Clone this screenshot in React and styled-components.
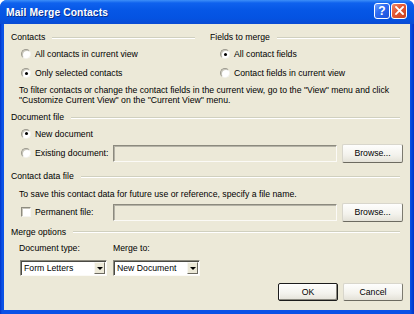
import React from "react";
import styled, { createGlobalStyle } from "styled-components";

const GlobalStyle = createGlobalStyle`
  html, body {
    margin: 0;
    padding: 0;
    background: #ffffff;
  }
  body {
    font-family: "Liberation Sans", Arial, sans-serif;
    font-size: 8.7px;
    color: #000;
  }
`;

const Window = styled.div`
  width: 414px;
  height: 314px;
  box-sizing: border-box;
  display: flex;
  flex-direction: column;
  background: linear-gradient(to right, #0033c8 0px, #0a52e6 2px, #0a52e6 410px, #0033c8 414px);
  padding: 0 4px 4px 4px;
  border-radius: 7px 7px 0 0;
  overflow: hidden;
`;

const TitleBar = styled.div`
  height: 24px;
  margin: 0 -4px;
  padding: 0 7px 0 6px;
  display: flex;
  align-items: center;
  justify-content: space-between;
  background: linear-gradient(
    to bottom,
    #3d8ff8 0px,
    #0f62ee 3px,
    #0657e6 10px,
    #0453e2 18px,
    #0a4bd4 24px
  );
`;

const Title = styled.span`
  color: #fff;
  font-weight: bold;
  font-size: 10.3px;
  letter-spacing: 0.1px;
  text-shadow: 1px 1px 0 #0a2f8c;
  margin-top: 1px;
`;

const Caption = styled.div`
  display: flex;
  gap: 1px;
  margin-top: -3px;
`;

const CapButton = styled.div`
  width: 14px;
  height: 14px;
  border: 1px solid #fff;
  border-radius: 3px;
  display: flex;
  align-items: center;
  justify-content: center;
  color: #fff;
  font-weight: bold;
  font-size: 12px;
  background: ${(p) =>
    p.$close
      ? "linear-gradient(135deg, #f08a6a 0%, #e35a36 40%, #c8401e 100%)"
      : "linear-gradient(135deg, #6fa0ff 0%, #2e6cf2 40%, #1c50d8 100%)"};
`;

const Body = styled.div`
  flex: 1;
  background: #ece9d8;
  padding: 8px 7px 0 7px;
  display: flex;
  flex-direction: column;
`;

const Columns = styled.div`
  display: grid;
  grid-template-columns: 199px 1fr;
`;

const Column = styled.div`
  display: flex;
  flex-direction: column;
`;

const GroupHeader = styled.div`
  display: flex;
  align-items: center;
  gap: 7px;
  height: 11px;
  line-height: 11px;
  margin-top: ${(p) => p.$top || 0}px;
  padding-right: ${(p) => p.$right || 3}px;
  white-space: nowrap;
  &::after {
    content: "";
    flex: 1;
    height: 0;
    border-top: 1px solid #d0d0bf;
    border-bottom: 1px solid #ffffff;
  }
`;

const Spacer = styled.div`
  height: ${(p) => p.$h}px;
`;

const OptionRow = styled.label`
  display: flex;
  align-items: center;
  gap: 4px;
  height: ${(p) => p.$h || 19}px;
  padding-left: 10px;
  white-space: nowrap;
`;

const Radio = styled.span`
  width: 8px;
  height: 8px;
  border-radius: 50%;
  border: 1px solid;
  border-color: #9c9a8e #f4f3ee #f4f3ee #9c9a8e;
  background: radial-gradient(circle at 60% 60%, #ffffff 0%, #ffffff 55%, #e6e4da 100%);
  box-shadow: inset 1px 1px 0 #c8c6ba;
  display: flex;
  align-items: center;
  justify-content: center;
  flex: none;
  &::after {
    content: "";
    width: 3px;
    height: 3px;
    border-radius: 50%;
    background: ${(p) => (p.$on ? "#000" : "transparent")};
  }
`;

const Check = styled.span`
  width: 8px;
  height: 8px;
  border: 1px solid;
  border-color: #8e8c80 #f6f5f0 #f6f5f0 #8e8c80;
  box-shadow: inset 1px 1px 0 #c9c7bb;
  background: #fff;
  flex: none;
`;

const Note = styled.p`
  margin: ${(p) => p.$top || 0}px 0 0 0;
  padding-left: 8px;
  line-height: 10.5px;
`;

const FileRow = styled.div`
  display: grid;
  grid-template-columns: 97px 1fr 61px;
  column-gap: 5px;
  align-items: center;
  height: 20px;
  margin-top: ${(p) => p.$top || 0}px;
`;

const Field = styled.div`
  height: 15px;
  border: 1px solid;
  border-color: #8c8a7e #fbfaf6 #fbfaf6 #8c8a7e;
  box-shadow: inset 1px 1px 0 #b4b2a6;
  background: #ece9d8;
`;

const Button = styled.div`
  height: ${(p) => p.$h || 18}px;
  box-sizing: border-box;
  display: flex;
  align-items: center;
  justify-content: center;
  border: 1px solid;
  border-color: ${(p) => (p.$default ? "#1c1c1c" : "#d8d6cc #7c7a70 #6c6a60 #d8d6cc")};
  border-radius: 2px;
  background: linear-gradient(to bottom, #fefefd 0%, #f3f2ec 60%, #e4e2d8 100%);
  box-shadow: ${(p) => (p.$default ? "inset -1px -1px 0 #8a887e, inset 1px 1px 0 #fff" : "none")};
  width: ${(p) => (p.$w ? `${p.$w}px` : "auto")};
`;

const MergeGrid = styled.div`
  display: grid;
  grid-template-columns: 94px 1fr;
  padding-left: 8px;
  margin-top: 5px;
  row-gap: 6.5px;
`;

const Label = styled.div`
  line-height: 11px;
  height: 11px;
`;

const Select = styled.div`
  width: ${(p) => p.$w}px;
  height: 16px;
  box-sizing: border-box;
  display: flex;
  align-items: center;
  border: 1px solid;
  border-color: #8c8a7e #fbfaf6 #fbfaf6 #8c8a7e;
  box-shadow: inset 1px 1px 0 #4a4a44;
  background: #fff;
  padding: 1px 1px 1px 3px;
  margin-left: ${(p) => p.$ml || 0}px;
`;

const SelectText = styled.span`
  flex: 1;
  white-space: nowrap;
`;

const Arrow = styled.span`
  width: 11px;
  height: 12px;
  box-sizing: border-box;
  background: #ece9d8;
  border: 1px solid;
  border-color: #f8f7f2 #6c6a60 #6c6a60 #f8f7f2;
  display: flex;
  align-items: center;
  justify-content: center;
  &::after {
    content: "";
    border-left: 3px solid transparent;
    border-right: 3px solid transparent;
    border-top: 3px solid #000;
  }
`;

const Footer = styled.div`
  display: flex;
  justify-content: flex-end;
  gap: 5px;
  margin-top: 7px;
`;

export default function App() {
  return (
    <>
      <GlobalStyle />
      <Window>
        <TitleBar>
          <Title>Mail Merge Contacts</Title>
          <Caption>
            <CapButton>?</CapButton>
            <CapButton $close>
              <svg width="9" height="9" viewBox="0 0 9 9">
                <path d="M1 1 L8 8 M8 1 L1 8" stroke="#fff" strokeWidth="1.8" strokeLinecap="square" />
              </svg>
            </CapButton>
          </Caption>
        </TitleBar>
        <Body>
          <Columns>
            <Column>
              <GroupHeader $right={15}>Contacts</GroupHeader>
              <Spacer $h={1.5} />
              <OptionRow>
                <Radio />
                All contacts in current view
              </OptionRow>
              <OptionRow>
                <Radio $on />
                Only selected contacts
              </OptionRow>
            </Column>
            <Column>
              <GroupHeader>Fields to merge</GroupHeader>
              <Spacer $h={1.5} />
              <OptionRow>
                <Radio $on />
                All contact fields
              </OptionRow>
              <OptionRow>
                <Radio />
                Contact fields in current view
              </OptionRow>
            </Column>
          </Columns>
          <Note $top={2}>
            To filter contacts or change the contact fields in the current view, go to the "View" menu and click
            <br />
            "Customize Current View" on the "Current View" menu.
          </Note>

          <GroupHeader $top={6.5}>Document file</GroupHeader>
          <Spacer $h={1} />
          <OptionRow>
            <Radio $on />
            New document
          </OptionRow>
          <FileRow>
            <OptionRow $h={20}>
              <Radio />
              Existing document:
            </OptionRow>
            <Field />
            <Button $h={19}>Browse...</Button>
          </FileRow>

          <GroupHeader $top={8}>Contact data file</GroupHeader>
          <Note $top={7}>To save this contact data for future use or reference, specify a file name.</Note>
          <FileRow $top={2.5}>
            <OptionRow $h={20}>
              <Check />
              Permanent file:
            </OptionRow>
            <Field />
            <Button $h={19}>Browse...</Button>
          </FileRow>

          <GroupHeader $top={4.5}>Merge options</GroupHeader>
          <MergeGrid>
            <Label>Document type:</Label>
            <Label>Merge to:</Label>
            <Select $w={87} $ml={1}>
              <SelectText>Form Letters</SelectText>
              <Arrow />
            </Select>
            <Select $w={87}>
              <SelectText>New Document</SelectText>
              <Arrow />
            </Select>
          </MergeGrid>
          <Footer>
            <Button $default $w={60}>OK</Button>
            <Button $w={60}>Cancel</Button>
          </Footer>
        </Body>
      </Window>
    </>
  );
}
